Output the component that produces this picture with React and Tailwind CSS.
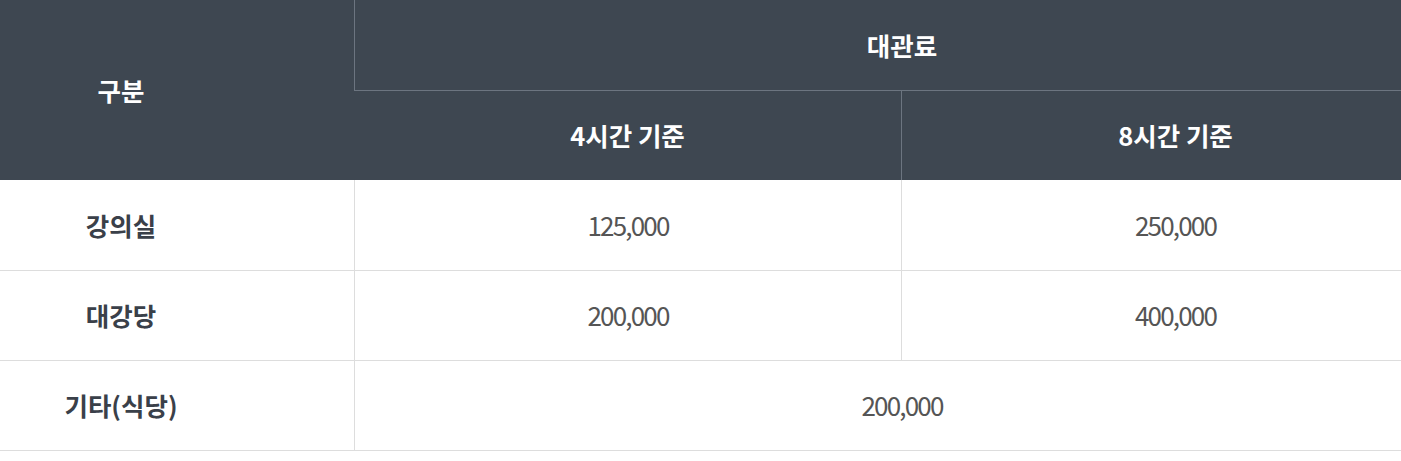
export default function App() {
  const font = { fontFamily: '"Noto Sans CJK KR", "Noto Sans", sans-serif' };
  const head = "flex items-center justify-center bg-[#3e4751] text-[25.5px] font-bold text-white";
  const label = "flex items-center justify-center border-b border-[#dddddd] pr-[112px] text-[25.5px] font-bold text-[#3a4049]";
  const num = "flex items-center justify-center border-b border-l border-[#dddddd] pb-[2px] text-[26px] tracking-[-1.8px] text-[#555555]";
  return (
    <div className="w-[1401px] bg-white" style={font}>
      <div className="grid grid-cols-[354px_547px_500px]">
        {/* header */}
        <div className={`row-span-2 pr-[112px] ${head}`}>구분</div>
        <div className={`col-span-2 h-[91px] border-b border-l border-[#6c7580] pl-[48px] ${head}`}>대관료</div>
        <div className={`h-[89px] ${head}`}>4시간 기준</div>
        <div className={`h-[89px] border-l border-[#6c7580] pl-[48px] ${head}`}>8시간 기준</div>

        {/* row 1 */}
        <div className={`h-[91px] ${label}`}>강의실</div>
        <div className={`h-[91px] ${num}`}>125,000</div>
        <div className={`h-[91px] pl-[48px] ${num}`}>250,000</div>

        {/* row 2 */}
        <div className={`h-[90px] ${label}`}>대강당</div>
        <div className={`h-[90px] ${num}`}>200,000</div>
        <div className={`h-[90px] pl-[48px] ${num}`}>400,000</div>

        {/* row 3 */}
        <div className={`h-[90px] ${label}`}>기타(식당)</div>
        <div className={`col-span-2 h-[90px] pl-[48px] ${num}`}>200,000</div>
      </div>
    </div>
  );
}
